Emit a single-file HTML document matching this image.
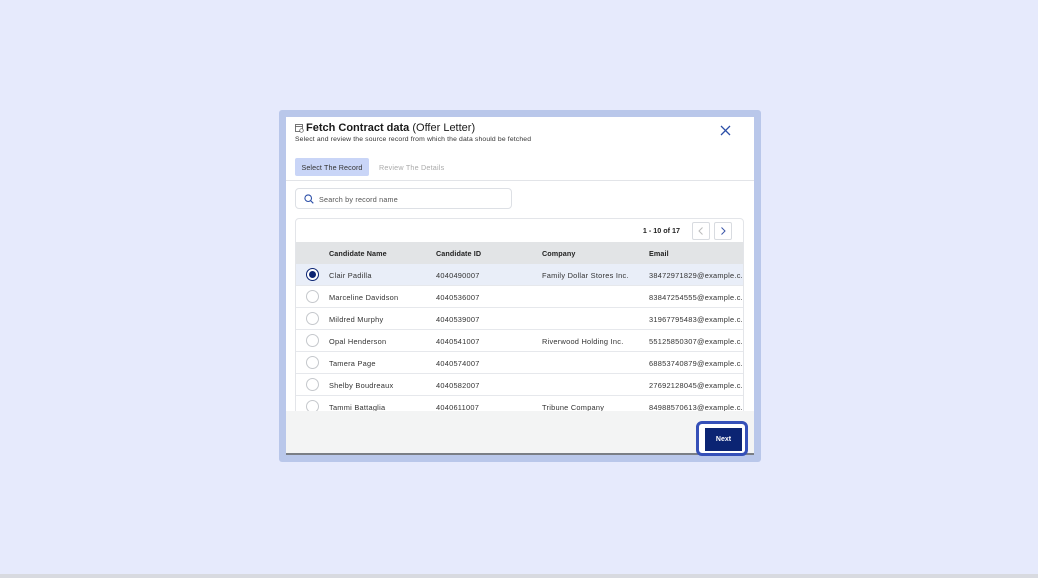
<!DOCTYPE html>
<html><head><style>
*{box-sizing:border-box;margin:0;padding:0}
body{width:1038px;height:578px;background:#e6eafc;font-family:"Liberation Sans",sans-serif;position:relative;overflow:hidden}
.bottom{position:absolute;left:0;top:574px;width:1038px;height:4px;background:#d8dae0}
.frame{position:absolute;left:279px;top:110px;width:482px;height:352px;background:#b9c7ea;border-radius:3px}
.panel{position:absolute;left:286px;top:117px;width:468px;height:338px;background:#fff;overflow:hidden}
.title{position:absolute;left:20px;top:5px;font-size:11px;color:#1a1a1a}
.title b{font-weight:bold}
.sub{position:absolute;left:9px;top:19px;font-size:6.8px;color:#333;letter-spacing:0.15px}
.close{position:absolute;left:434px;top:8px}
.tab1{position:absolute;left:9px;top:41px;width:74px;height:18px;background:#c9d5f7;border-radius:2px;font-size:7.2px;color:#333;text-align:center;line-height:19px;letter-spacing:0.1px}
.tab2{position:absolute;left:93px;top:41px;font-size:7.2px;color:#aaa;line-height:19px;letter-spacing:0.2px}
.hr{position:absolute;left:0;top:63px;width:468px;height:1px;background:#e2e4e8}
.search{position:absolute;left:9px;top:71px;width:217px;height:21px;border:1px solid #dde0e5;border-radius:4px}
.search span{position:absolute;left:23px;top:6px;font-size:7.2px;color:#555;letter-spacing:0.2px}
.tbl{position:absolute;left:9px;top:101px;width:449px;height:240px;border:1px solid #e3e5e9;border-radius:4px;overflow:hidden}
.pg{position:absolute;right:63px;top:7px;font-size:7.2px;color:#222;font-weight:bold}
.pb{position:absolute;top:3px;width:18px;height:18px;border:1px solid #d8dbe0;border-radius:2px;background:#fff}
.th{position:absolute;left:0;top:23px;width:449px;height:22px;background:#e2e4e6;font-size:7.2px;font-weight:bold;color:#222;letter-spacing:0.1px}
.row{position:absolute;left:0;width:449px;height:22px;border-bottom:1px solid #e6e8ec;font-size:7.4px;color:#333;letter-spacing:0.25px}
.c{position:absolute;top:7px;white-space:nowrap}
.rad{position:absolute;left:10px;top:4px;width:13px;height:13px;border:1px solid #c5c8cc;border-radius:50%;background:#fff}
.footer{position:absolute;left:0;top:294px;width:468px;height:42px;background:#f3f4f4}
.line{position:absolute;left:0;top:336px;width:468px;height:2px;background:#7a7e85}
.nextring{position:absolute;left:696px;top:421px;width:52px;height:35px;border:3px solid #3550b8;border-radius:6px;background:#fff}
.next{position:absolute;left:705px;top:428px;width:37px;height:23px;background:#0b2473;color:#fff;font-size:7px;font-weight:bold;text-align:center;line-height:24px}
</style></head><body>
<div class="bottom"></div>
<div class="frame"></div>
<div class="panel">
<svg style="position:absolute;left:9px;top:7px" width="9" height="9" viewBox="0 0 9 9"><rect x="0.5" y="0.5" width="7" height="7" fill="none" stroke="#555" stroke-width="0.8"/><line x1="0.5" y1="2.5" x2="7.5" y2="2.5" stroke="#555" stroke-width="0.8"/><circle cx="6.5" cy="6.5" r="1.8" fill="#fff" stroke="#555" stroke-width="0.7"/></svg>
<div class="title"><b>Fetch Contract data</b> (Offer Letter)</div>
<div class="sub">Select and review the source record from which the data should be fetched</div>
<svg class="close" width="11" height="11" viewBox="0 0 11 11"><path d="M1 1L10 10M10 1L1 10" stroke="#2c4fa8" stroke-width="1.3"/></svg>
<div class="tab1">Select The Record</div>
<div class="tab2">Review The Details</div>
<div class="hr"></div>
<div class="search"><svg style="position:absolute;left:8px;top:5px" width="10" height="10" viewBox="0 0 10 10"><circle cx="4.2" cy="4.2" r="3.3" fill="none" stroke="#2c4fa8" stroke-width="1.1"/><path d="M6.6 6.6L9.3 9.3" stroke="#2c4fa8" stroke-width="1.1"/></svg><span>Search by record name</span></div>
<div class="tbl">
<div class="pg">1 - 10 of 17</div>
<div class="pb" style="left:396px"><svg width="16" height="16" viewBox="0 0 16 16"><path d="M9.5 4.5L6 8l3.5 3.5" fill="none" stroke="#bbb" stroke-width="1"/></svg></div>
<div class="pb" style="left:418px"><svg width="16" height="16" viewBox="0 0 16 16"><path d="M6.5 4.5L10 8l-3.5 3.5" fill="none" stroke="#3a55a8" stroke-width="1"/></svg></div>
<div class="th"><span class="c" style="left:33px">Candidate Name</span><span class="c" style="left:140px">Candidate ID</span><span class="c" style="left:246px">Company</span><span class="c" style="left:353px">Email</span></div>
<div class="row" style="top:45px;background:#e9eef8"><div class="rad" style="border-color:#0b2473"><div style="position:absolute;left:2px;top:2px;width:7px;height:7px;border-radius:50%;background:#0b2473"></div></div><span class="c" style="left:33px">Clair Padilla</span><span class="c" style="left:140px">4040490007</span><span class="c" style="left:246px">Family Dollar Stores Inc.</span><span class="c" style="left:353px">38472971829@example.c..</span></div>
<div class="row" style="top:67px"><div class="rad"></div><span class="c" style="left:33px">Marceline Davidson</span><span class="c" style="left:140px">4040536007</span><span class="c" style="left:353px">83847254555@example.c..</span></div>
<div class="row" style="top:89px"><div class="rad"></div><span class="c" style="left:33px">Mildred Murphy</span><span class="c" style="left:140px">4040539007</span><span class="c" style="left:353px">31967795483@example.c..</span></div>
<div class="row" style="top:111px"><div class="rad"></div><span class="c" style="left:33px">Opal Henderson</span><span class="c" style="left:140px">4040541007</span><span class="c" style="left:246px">Riverwood Holding Inc.</span><span class="c" style="left:353px">55125850307@example.c..</span></div>
<div class="row" style="top:133px"><div class="rad"></div><span class="c" style="left:33px">Tamera Page</span><span class="c" style="left:140px">4040574007</span><span class="c" style="left:353px">68853740879@example.c..</span></div>
<div class="row" style="top:155px"><div class="rad"></div><span class="c" style="left:33px">Shelby Boudreaux</span><span class="c" style="left:140px">4040582007</span><span class="c" style="left:353px">27692128045@example.c..</span></div>
<div class="row" style="top:177px"><div class="rad"></div><span class="c" style="left:33px">Tammi Battaglia</span><span class="c" style="left:140px">4040611007</span><span class="c" style="left:246px">Tribune Company</span><span class="c" style="left:353px">84988570613@example.c..</span></div>
</div>
<div class="footer"></div>
<div class="line"></div>
</div>
<div class="nextring"></div>
<div class="next">Next</div>
</body></html>
